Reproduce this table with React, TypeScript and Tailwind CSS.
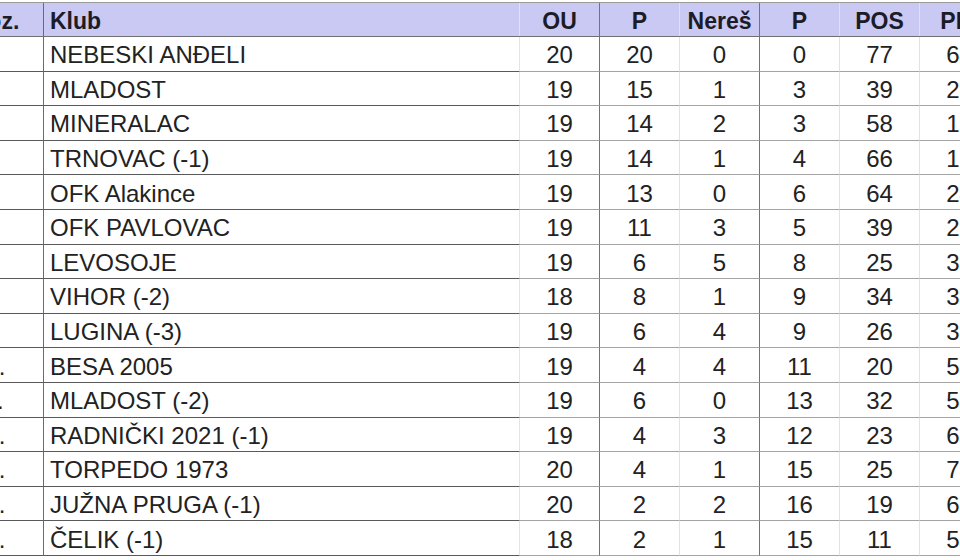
import clsx from 'clsx';

type Row = {
  pos: number;
  club: string;
  played: number;
  won: number;
  drawn: number;
  lost: number;
  scored: number;
  conceded: number;
};

const rows: Row[] = [
  { pos: 1, club: 'NEBESKI ANĐELI', played: 20, won: 20, drawn: 0, lost: 0, scored: 77, conceded: 64 },
  { pos: 2, club: 'MLADOST', played: 19, won: 15, drawn: 1, lost: 3, scored: 39, conceded: 21 },
  { pos: 3, club: 'MINERALAC', played: 19, won: 14, drawn: 2, lost: 3, scored: 58, conceded: 18 },
  { pos: 4, club: 'TRNOVAC (-1)', played: 19, won: 14, drawn: 1, lost: 4, scored: 66, conceded: 19 },
  { pos: 5, club: 'OFK Alakince', played: 19, won: 13, drawn: 0, lost: 6, scored: 64, conceded: 24 },
  { pos: 6, club: 'OFK PAVLOVAC', played: 19, won: 11, drawn: 3, lost: 5, scored: 39, conceded: 28 },
  { pos: 7, club: 'LEVOSOJE', played: 19, won: 6, drawn: 5, lost: 8, scored: 25, conceded: 31 },
  { pos: 8, club: 'VIHOR (-2)', played: 18, won: 8, drawn: 1, lost: 9, scored: 34, conceded: 36 },
  { pos: 9, club: 'LUGINA (-3)', played: 19, won: 6, drawn: 4, lost: 9, scored: 26, conceded: 33 },
  { pos: 10, club: 'BESA 2005', played: 19, won: 4, drawn: 4, lost: 11, scored: 20, conceded: 52 },
  { pos: 11, club: 'MLADOST (-2)', played: 19, won: 6, drawn: 0, lost: 13, scored: 32, conceded: 57 },
  { pos: 12, club: 'RADNIČKI 2021 (-1)', played: 19, won: 4, drawn: 3, lost: 12, scored: 23, conceded: 61 },
  { pos: 13, club: 'TORPEDO 1973', played: 20, won: 4, drawn: 1, lost: 15, scored: 25, conceded: 72 },
  { pos: 14, club: 'JUŽNA PRUGA (-1)', played: 20, won: 2, drawn: 2, lost: 16, scored: 19, conceded: 66 },
  { pos: 15, club: 'ČELIK (-1)', played: 18, won: 2, drawn: 1, lost: 15, scored: 11, conceded: 58 },
];

// Right-hand border per column: dark rules after Poz., OU and Nereš, faint ones elsewhere.
const colRight = [
  'border-r-[#6b6b6b]',
  'border-r-[#e4e4e4]',
  'border-r-[#747474]',
  'border-r-[#e2e2e2]',
  'border-r-[#747474]',
  'border-r-[#e2e2e2]',
  'border-r-[#e2e2e2]',
  'border-r-[#e2e2e2]',
];

const headers = ['Poz.', 'Klub', 'OU', 'P', 'Nereš', 'P', 'POS', 'PRI'];

const grid = 'grid grid-cols-[74px_476px_80px_80px_80px_80px_80px_80px]';

export default function App() {
  return (
    <div
      className="h-[560px] w-[960px] overflow-hidden bg-white text-[#222]"
      style={{ fontFamily: '"Liberation Sans", Arial, sans-serif' }}
    >
      <div className="-ml-[30px] mt-[2px] w-[1030px] border-t border-t-[#9a9a9a]">
        <div className={clsx(grid, 'h-[34px] border-b border-b-[#707070] bg-[#c9c9f3]')}>
          {headers.map((h, i) => (
            <div
              key={i}
              className={clsx(
                'flex items-center border-r pt-[3px] text-[23px] font-bold leading-none text-[#1c1c28]',
                colRight[i],
                i === 0 && 'pl-[2px]',
                i === 1 && 'pl-[6px]',
                i > 1 && 'justify-center',
              )}
            >
              {h}
            </div>
          ))}
        </div>

        {rows.map((r) => {
          const cells = [`${r.pos}.`, r.club, r.played, r.won, r.drawn, r.lost, r.scored, r.conceded];
          return (
            <div key={r.pos} className={clsx(grid, 'h-[34.6px]')}>
              {cells.map((c, i) => (
                <div
                  key={i}
                  className={clsx(
                    'flex items-center border-r border-b pt-[3px] text-[24px] leading-none',
                    colRight[i],
                    i === 0 && 'pl-[2px]',
                    i === 1 && 'pl-[6px]',
                    i < 2 ? 'border-b-[#5a5a5a]' : 'justify-center border-b-[#a3a3a3]',
                  )}
                >
                  {c}
                </div>
              ))}
            </div>
          );
        })}
      </div>
    </div>
  );
}
